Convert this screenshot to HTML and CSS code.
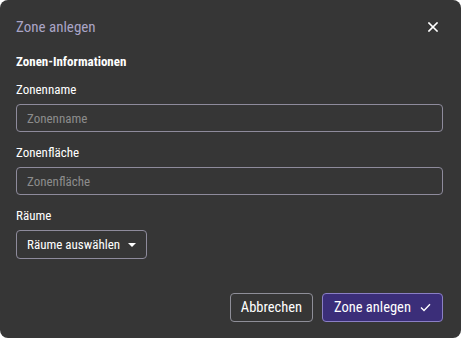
FILE: index.html
```html
<!DOCTYPE html>
<html lang="de">
<head>
    <meta charset="UTF-8">
    <meta name="viewport" content="width=device-width, initial-scale=1.0">
    <title>Zone anlegen</title>
    <link rel="stylesheet" href="styles.css">
</head>
<body>
    <div class="dialog">
        <div class="dialog-header">
            <h2 class="dialog-title">Zone anlegen</h2>
            <button class="close-btn" aria-label="Schließen">
                <svg width="10" height="10" viewBox="0 0 10 10">
                    <path d="M1 1L9 9M9 1L1 9" stroke="#fff" stroke-width="1.6" stroke-linecap="square"/>
                </svg>
            </button>
        </div>
        <div class="section-title">Zonen-Informationen</div>
        <div class="field first">
            <label for="zoneName">Zonenname</label>
            <input type="text" id="zoneName" placeholder="Zonenname">
        </div>
        <div class="field">
            <label for="zoneArea">Zonenfläche</label>
            <input type="text" id="zoneArea" placeholder="Zonenfläche">
        </div>
        <div class="field">
            <label>Räume</label>
            <button class="select-btn">
                <span>Räume auswählen</span>
                <svg width="8" height="4" viewBox="0 0 8 4"><path d="M0 0H8L4 4Z" fill="#fff"/></svg>
            </button>
        </div>
        <div class="dialog-footer">
            <button class="btn btn-outline">Abbrechen</button>
            <button class="btn btn-primary">
                Zone anlegen
                <svg width="11" height="9" viewBox="0 0 11 9">
                    <path d="M1 4.6L4 7.5L10 1.3" fill="none" stroke="#fff" stroke-width="1.4"/>
                </svg>
            </button>
        </div>
    </div>
</body>
</html>
```

FILE: styles.css
```css
body {
    margin: 0;
    padding: 0;
    background: #fff;
    font-family: Roboto, "Noto Sans", sans-serif;
    font-stretch: 75%;
}
.dialog {
    width: 461px;
    height: 338px;
    box-sizing: border-box;
    background: #363636;
    border-radius: 8px;
    padding: 0 18px 16px 16px;
    display: flex;
    flex-direction: column;
    color: #fff;
}
.dialog-header {
    height: 54px;
    display: flex;
    align-items: center;
    justify-content: space-between;
}
.dialog-title {
    margin: 0;
    font-size: 15px;
    font-weight: 400;
    color: #aaa5c6;
}
.close-btn {
    width: 20px;
    height: 24px;
    padding: 0;
    border: none;
    background: none;
    display: flex;
    align-items: center;
    justify-content: center;
    cursor: pointer;
}
.section-title {
    font-size: 13px;
    font-weight: 700;
    line-height: 16px;
}
.field {
    margin-top: 13px;
    display: flex;
    flex-direction: column;
    align-items: flex-start;
}
.field.first {
    margin-top: 12px;
}
label {
    font-size: 13px;
    font-weight: 400;
    line-height: 16px;
    margin-bottom: 6px;
}
input {
    width: 100%;
    height: 28px;
    box-sizing: border-box;
    padding: 0 10px;
    border: 1px solid #8e8b9c;
    border-radius: 4px;
    background: #363636;
    color: #fff;
    font-family: inherit;
    font-stretch: inherit;
    font-size: 13px;
    outline: none;
}
input::placeholder {
    color: #8c8c8c;
}
.select-btn {
    width: 131px;
    height: 29px;
    box-sizing: border-box;
    padding: 0 10px;
    border: 1px solid #8e8b9c;
    border-radius: 4px;
    background: #363636;
    color: #fff;
    font-family: inherit;
    font-stretch: inherit;
    font-size: 13px;
    white-space: nowrap;
    display: flex;
    align-items: center;
    justify-content: space-between;
}
.dialog-footer {
    margin-top: auto;
    display: flex;
    justify-content: flex-end;
    gap: 9px;
}
.btn {
    height: 29px;
    box-sizing: border-box;
    border-radius: 4px;
    font-family: inherit;
    font-stretch: inherit;
    font-size: 14.5px;
    color: #fff;
    white-space: nowrap;
    display: flex;
    align-items: center;
    gap: 9px;
    cursor: pointer;
}
.btn-outline {
    width: 83px;
    justify-content: center;
    background: #363636;
    border: 1px solid #8e8e98;
}
.btn-primary {
    width: 121px;
    padding: 0 0 0 11px;
    background: #3b2e79;
    border: 1px solid #8a7fc4;
}
```
